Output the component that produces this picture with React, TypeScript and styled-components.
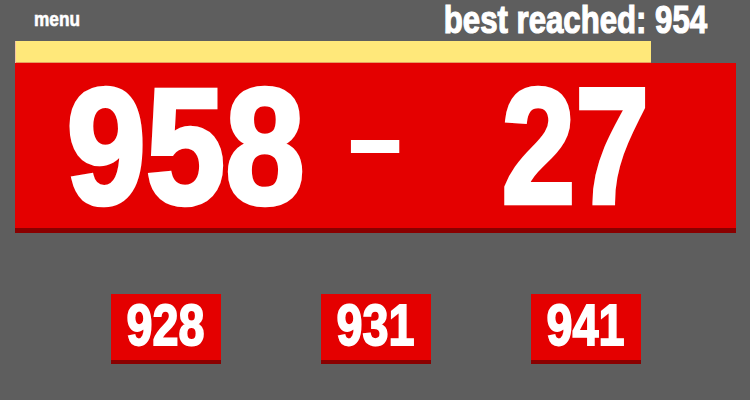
import React from 'react';
import styled, { createGlobalStyle } from 'styled-components';

const GlobalStyle = createGlobalStyle`
  html, body {
    margin: 0;
    padding: 0;
    background: #5e5e5e;
  }
  body {
    font-family: "Liberation Sans Narrow", "Liberation Sans", Arial, sans-serif;
    font-weight: 700;
    color: #fff;
  }
`;

const Page = styled.div`
  width: 750px;
  height: 400px;
  box-sizing: border-box;
  padding: 0 14px 0 15px;
  overflow: hidden;
`;

// no condensed face is installed, so the bold sans is squeezed to get the Impact-like look
const Condensed = styled.span<{ origin?: string; squeeze?: number }>`
  display: inline-block;
  transform: scaleX(${({ squeeze }) => squeeze ?? 0.82});
  transform-origin: ${({ origin }) => origin ?? 'center'} center;
  white-space: nowrap;
`;

const TopBar = styled.div`
  height: 41px;
  display: flex;
  justify-content: space-between;
  align-items: flex-start;
`;

const MenuLink = styled.div`
  margin: 8px 0 0 19px;
  font-size: 21px;
  line-height: 21px;
  -webkit-text-stroke: 0.6px #fff;
  cursor: pointer;
`;

const Best = styled.div`
  margin: 1px 29px 0 0;
  font-size: 38px;
  line-height: 38px;
  -webkit-text-stroke: 1.2px #fff;
`;

const Progress = styled.div`
  height: 22px;
  background: #ffe87a;
  box-shadow: inset 1px 0 0 #f4c4a4, inset 0 -1px 0 #e8a060;
`;

const Scoreboard = styled.div`
  height: 165px;
  background: #e40000;
  border-bottom: 5px solid #8a0000;
  display: grid;
  grid-template-columns: 300px 80px 320px;
  align-items: center;
  padding: 0 0 0 20px;
  line-height: 1;
`;

const Cell = styled.div<{ size: number; stroke?: number; lift?: number }>`
  display: flex;
  justify-content: center;
  font-size: ${({ size }) => size}px;
  -webkit-text-stroke: ${({ stroke }) => stroke ?? 0}px #fff;
  margin-bottom: ${({ lift }) => lift ?? 0}px;
`;

const Choices = styled.div`
  display: flex;
  justify-content: center;
  gap: 100px;
  margin-top: 61px;
  padding-left: 1px;
`;

const Choice = styled.button`
  width: 110px;
  height: 70px;
  box-sizing: border-box;
  border: none;
  border-bottom: 4px solid #8a0000;
  background: #e40000;
  color: #fff;
  font-family: inherit;
  font-weight: 700;
  font-size: 57px;
  line-height: 1;
  padding: 0 0 3px;
  -webkit-text-stroke: 1.8px #fff;
  cursor: pointer;
`;

const App: React.FC = () => {
  const best = 954;
  const progress = 0.882;
  const choices = [928, 931, 941];

  return (
    <>
      <GlobalStyle />
      <Page>
        <TopBar>
          <MenuLink>
            <Condensed origin="left">menu</Condensed>
          </MenuLink>
          <Best>
            <Condensed origin="right">best reached: {best}</Condensed>
          </Best>
        </TopBar>
        <Progress style={{ width: `${progress * 100}%` }} />
        <Scoreboard>
          <Cell size={166} stroke={4.5} lift={20}>
            <Condensed squeeze={0.86}>958</Condensed>
          </Cell>
          <Cell size={130} lift={40}>
            <Condensed squeeze={0.75}>–</Condensed>
          </Cell>
          <Cell size={166} stroke={4.5} lift={20}>
            <Condensed squeeze={0.8}>27</Condensed>
          </Cell>
        </Scoreboard>
        <Choices>
          {choices.map(c => (
            <Choice key={c}>
              <Condensed>{c}</Condensed>
            </Choice>
          ))}
        </Choices>
      </Page>
    </>
  );
};

export default App;
